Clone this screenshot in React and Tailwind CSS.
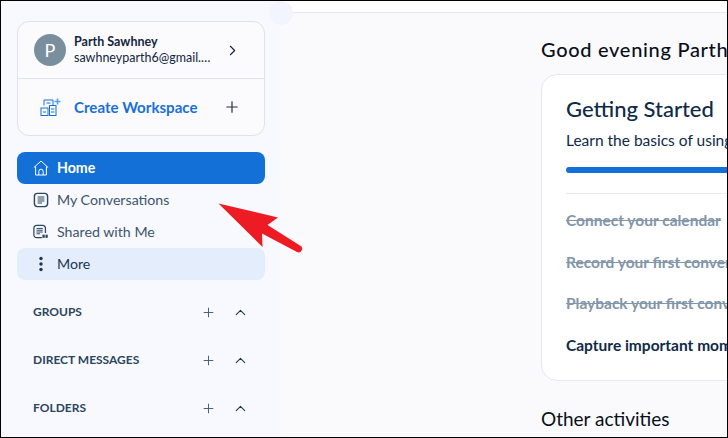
import { ChevronRight, ChevronUp, Plus } from "lucide-react"

const HomeIcon = () => (
  <svg width="16" height="16" viewBox="0 0 16 16" fill="none" stroke="white" strokeWidth="1" strokeLinejoin="round">
    <path d="M0.8 7.6 8 1l7.2 6.6" />
    <path d="M2.6 6.4V15h10.8V6.4" />
    <path d="M5.8 15v-3.6a2.2 2.2 0 0 1 4.4 0V15" />
  </svg>
)

const ConversationIcon = () => (
  <svg width="16" height="16" viewBox="0 0 16 16" fill="none" stroke="#2f4660" strokeWidth="1.4">
    <rect x="1.4" y="1.4" width="13.2" height="13.2" rx="3" />
    <path d="M4.6 5h6.8M4.6 7h6.8M4.6 9h6.8M4.6 11h4.4" strokeWidth="1.1" />
  </svg>
)

const SharedIcon = () => (
  <svg width="18" height="16" viewBox="0 0 18 16" fill="none" stroke="#2f4660" strokeWidth="1.4">
    <path d="M10 14.4H4a3 3 0 0 1-3-3V3.6a3 3 0 0 1 3-3h7a3 3 0 0 1 3 3V9" />
    <path d="M4 4h7M4 6h7M4 8h7M4 10h4" strokeWidth="1.1" />
    <rect x="10.6" y="11" width="2.6" height="3.6" fill="#2f4660" stroke="none" />
    <rect x="14" y="11" width="2.6" height="3.6" fill="#2f4660" stroke="none" />
  </svg>
)

const WorkspaceIcon = () => (
  <svg width="21" height="19" viewBox="0 0 21 19" fill="none" stroke="#1470d8" strokeWidth="1">
    <path d="M4 7.5V2h9v5.5" />
    <path d="M6.5 5h4" />
    <rect x="1" y="10" width="7" height="7.5" />
    <path d="M3 14h3" />
    <rect x="9.5" y="7.5" width="6.5" height="10" />
    <path d="M11 11h3.5M11 14h3.5" />
    <path d="M17.5 0.5v6M14.5 3.5h6" stroke="#5a9ee8" strokeWidth="1.6" />
  </svg>
)

const DotsIcon = () => (
  <svg width="16" height="16" viewBox="0 0 16 16" fill="#1f3550">
    <circle cx="8" cy="2.5" r="1.7" />
    <circle cx="8" cy="8" r="1.7" />
    <circle cx="8" cy="13.5" r="1.7" />
  </svg>
)

const NavRow = ({ icon, label, active, soft }) => (
  <div
    className={`flex h-8 items-center gap-2 rounded-lg pl-4 text-[14.2px] ${
      active ? "bg-[#1270d6] font-bold text-white" : soft ? "bg-[#e3edfc] text-[#1f3550]" : "text-[#3e546c]"
    }`}
  >
    <span className="flex w-4 justify-center">{icon}</span>
    <span>{label}</span>
  </div>
)

const SectionRow = ({ label }) => (
  <div className="flex h-12 items-center pl-4 pr-4">
    <span className="flex-1 text-xs font-bold text-[#2b4560]">{label}</span>
    <Plus size={15} strokeWidth={1.6} className="mr-4 text-[#4b627a]" />
    <ChevronUp size={17} strokeWidth={1.5} className="text-[#1f3550]" />
  </div>
)

const Step = ({ children, done }) => (
  <p
    className={`whitespace-nowrap text-[15.5px] font-bold ${
      done ? "text-[#8296a8] line-through" : "text-[#0f2a47]"
    }`}
  >
    {children}
  </p>
)

export default function App() {
  return (
    <div className="relative flex h-[438px] w-[728px] overflow-hidden border border-black bg-[#fafafd] font-['Lato',sans-serif]">
      {/* Sidebar */}
      <aside className="w-[280px] shrink-0 bg-[#f7f9fe] pl-4 pr-4 pt-5">
        <div className="rounded-xl border border-[#dfe2ea] bg-[#fbfbfe]">
          <div className="flex h-[57px] items-center border-b border-[#dfe2ea] pl-4 pr-[23px]">
            <div className="flex h-8 w-8 shrink-0 items-center justify-center rounded-full bg-[#7a8f9e] text-lg text-white">
              P
            </div>
            <div className="ml-2 min-w-0 flex-1">
              <p className="text-[12.5px] font-bold leading-4 text-[#14263c]">Parth Sawhney</p>
              <p className="truncate text-[12.5px] leading-4 text-[#14263c]">sawhneyparth6@gmail.com</p>
            </div>
            <ChevronRight size={17} strokeWidth={1.6} className="ml-3 text-[#14263c]" />
          </div>
          <div className="flex h-[56px] items-center pl-[22px] pr-[23px]">
            <WorkspaceIcon />
            <span className="ml-[13px] flex-1 text-[15.1px] font-bold text-[#1a6fd8]">Create Workspace</span>
            <Plus size={18} strokeWidth={1.6} className="text-[#26303c]" />
          </div>
        </div>

        <nav className="mt-4">
          <NavRow active icon={<HomeIcon />} label="Home" />
          <NavRow icon={<ConversationIcon />} label="My Conversations" />
          <NavRow icon={<SharedIcon />} label="Shared with Me" />
          <NavRow soft icon={<DotsIcon />} label="More" />
        </nav>

        <div className="mt-2">
          <SectionRow label="GROUPS" />
          <SectionRow label="DIRECT MESSAGES" />
          <SectionRow label="FOLDERS" />
        </div>
      </aside>

      {/* Main */}
      <main className="min-w-0 flex-1 overflow-hidden">
        <div className="h-3 border-b border-[#e6e7ee] bg-white" />
        <div className="w-[600px] pl-[260px] pt-6">
          <h2 className="whitespace-nowrap text-xl font-medium leading-6 tracking-[0.7px] text-[#0a0f18]">Good evening Parth</h2>
          <section className="mt-[13px] h-[307px] w-[500px] rounded-2xl border border-[#e6e8f0] bg-white pl-6 pt-5">
            <h3 className="text-[22px] font-medium leading-7 text-[#0f2a47]">Getting Started</h3>
            <p className="mt-[7px] whitespace-nowrap text-[15.5px] leading-5 text-[#0f2a47]">
              Learn the basics of using Otter
            </p>
            <div className="mt-[17px] h-1.5 rounded-full bg-[#1270d6]" />
            <div className="mt-5 h-px bg-[#e8e9ef]" />
            <div className="mt-[17px] flex flex-col gap-[22.6px] leading-[19px]">
              <Step done>Connect your calendar</Step>
              <Step done>Record your first conversation</Step>
              <Step done>Playback your first conversation</Step>
              <Step>Capture important moments</Step>
            </div>
          </section>
          <h2 className="mt-6 whitespace-nowrap text-[19px] leading-7 text-[#0a0f18]">Other activities</h2>
        </div>
      </main>

      {/* Collapse handle */}
      <div className="absolute left-[268px] top-0 h-6 w-6 rounded-full bg-[#f2f5fd]" />

      {/* Annotation arrow */}
      <svg className="absolute left-0 top-0" width="728" height="438" fill="none">
        <path d="M217.5 202.5 277 216.5 266.5 224 299 244.5a3.5 3.5 0 0 1-3 6.5L261 232.5 261.5 246Z" fill="#ed1c24" />
      </svg>
    </div>
  )
}
